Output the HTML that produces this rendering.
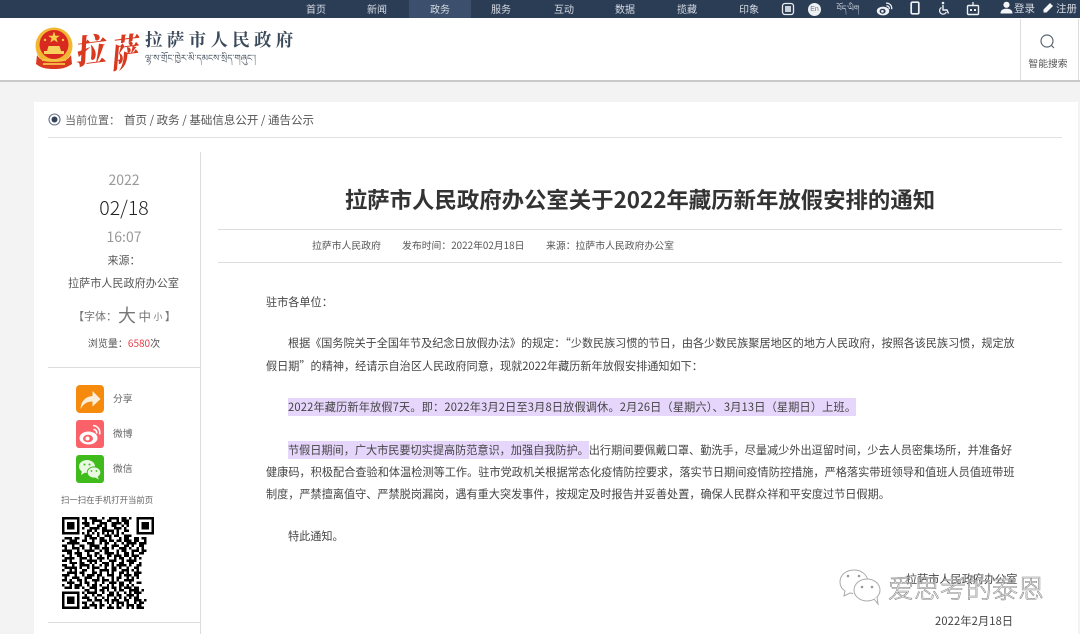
<!DOCTYPE html>
<html lang="zh-CN">
<head>
<meta charset="utf-8">
<title>拉萨市人民政府办公室关于2022年藏历新年放假安排的通知</title>
<style>
html,body{margin:0;padding:0;width:1080px;height:634px;overflow:hidden;background:#f3f3f3}
body{position:relative;font-family:"Liberation Sans","Noto Sans CJK SC",sans-serif;color:#444}
body,.t{font-family:"Noto Sans CJK SC","Liberation Sans",sans-serif}
.t{position:absolute;white-space:nowrap;line-height:16px;height:16px}
.c{transform:translateX(-50%)}
.b{position:absolute}
.n{color:#d5dbe3;font-size:10px;top:0;line-height:17px;height:17px}
.p{font-size:11.15px;color:#444;letter-spacing:0;font-weight:400}
mark{background:#e6d6fb;color:#444;padding:1px 0}
svg{position:absolute;display:block}
</style>
</head>
<body>
<!-- top bar -->
<div class="b" style="left:0;top:0;width:1080px;height:18px;background:#2b3c55"></div>
<div class="b" style="left:409px;top:0;width:62px;height:18px;background:#3c4f6c"></div>
<div class="t n c" style="left:316px">首页</div>
<div class="t n c" style="left:377px">新闻</div>
<div class="t n c" style="left:440px">政务</div>
<div class="t n c" style="left:501px">服务</div>
<div class="t n c" style="left:564px">互动</div>
<div class="t n c" style="left:625px">数据</div>
<div class="t n c" style="left:687px">揽藏</div>
<div class="t n c" style="left:749px">印象</div>

<svg style="left:781px;top:2px" width="14" height="14" viewBox="0 0 14 14"><rect x="1.5" y="1.5" width="11" height="11" rx="2.5" fill="none" stroke="#e8ecf0" stroke-width="1.3"/><rect x="4" y="4" width="6" height="6" fill="#c9d0da"/></svg>
<div class="b" style="left:808px;top:3px;width:13px;height:13px;border-radius:50%;background:#eef1f4;color:#6d7b8e;font-size:7px;line-height:13px;text-align:center;font-family:'Liberation Sans',sans-serif">En</div>
<div class="t n c" style="left:848px;font-size:8px;font-family:'DejaVu Sans','Noto Sans CJK SC',sans-serif">བོད་ཡིག</div>
<svg style="left:876px;top:1px" width="17" height="15" viewBox="0 0 17 15"><ellipse cx="7" cy="10" rx="6.2" ry="4.4" fill="#eef1f4"/><ellipse cx="6.6" cy="10.2" rx="3" ry="2.5" fill="#2b3c55"/><circle cx="6.4" cy="10.3" r="1.3" fill="#eef1f4"/><path d="M10 2.2a5 5 0 0 1 5.6 6M10.400 5a2.400 2.400 0 0 1 2.800 3" fill="none" stroke="#eef1f4" stroke-width="1.300"/></svg>
<svg style="left:910px;top:1px" width="10" height="15" viewBox="0 0 10 15"><rect x="1.200" y="1.200" width="7.600" height="11.600" rx="1.200" fill="none" stroke="#eef1f4" stroke-width="1.700"/></svg>
<svg style="left:938px;top:1px" width="12" height="15" viewBox="0 0 12 15"><circle cx="5" cy="2" r="1.300" fill="#eef1f4"/><path d="M5 4v5h4l1.500 3.500" fill="none" stroke="#eef1f4" stroke-width="1.400"/><path d="M3.500 6.500a3.500 3.500 0 1 0 4.800 4.500" fill="none" stroke="#eef1f4" stroke-width="1.200"/></svg>
<svg style="left:966px;top:1px" width="14" height="15" viewBox="0 0 14 15"><path d="M7 1v3" stroke="#eef1f4" stroke-width="1.300"/><rect x="1.500" y="4.500" width="11" height="9" rx="1" fill="none" stroke="#eef1f4" stroke-width="1.400"/><rect x="4" y="8" width="2" height="2" fill="#eef1f4"/><rect x="8" y="8" width="2" height="2" fill="#eef1f4"/></svg>
<svg style="left:1000px;top:1px" width="13" height="13" viewBox="0 0 13 13"><circle cx="6.500" cy="3.800" r="3.100" fill="#f3f5f7"/><path d="M.5 12.500c0-3.600 2.400-4.800 6-4.800s6 1.200 6 4.800z" fill="#f3f5f7"/></svg>
<div class="t n" style="left:1014px;font-size:10.500px">登录</div>
<svg style="left:1042px;top:2px" width="12" height="12" viewBox="0 0 12 12"><path d="M8 1l3 3-6.500 6.500H1.500V7.500z" fill="#f3f5f7"/></svg>
<div class="t n" style="left:1056px;font-size:10.500px">注册</div>

<!-- header -->
<div class="b" style="left:0;top:18px;width:1080px;height:62px;background:#fff;border-bottom:2px solid #c9c9c9"></div>
<div class="b" style="left:1020px;top:19px;width:57px;height:61px;border-left:1px solid #ddd;border-right:1px solid #ddd"></div>
<svg style="left:1039px;top:33px" width="17" height="17" viewBox="0 0 17 17"><circle cx="8" cy="8" r="6" fill="none" stroke="#5c6670" stroke-width="1.200"/><path d="M12.300 12.300l2.700 2.700" stroke="#5c6670" stroke-width="1.200"/></svg>
<div class="t c" style="left:1048px;top:55px;font-size:9.800px;color:#555">智能搜索</div>

<!-- emblem -->
<svg style="left:35px;top:27px" width="40" height="43" viewBox="0 0 40 43">
<circle cx="19" cy="19" r="18.500" fill="#f2b632"/>
<circle cx="19" cy="17.500" r="14.500" fill="#d8281f"/>
<path d="M19 4.500l1.500 4.200h4.400l-3.500 2.600 1.300 4.200-3.700-2.500-3.700 2.500 1.300-4.200-3.500-2.600h4.400z" fill="#f6cf47"/>
<circle cx="10" cy="13" r="1.200" fill="#f6cf47"/><circle cx="28" cy="13" r="1.200" fill="#f6cf47"/>
<path d="M9 27v-3h3l1.500-5h11l1.500 5h3v3z" fill="#f6d15c"/>
<path d="M2 28c4 6 8 7 17 7s13-1 17-7l1 9c-6 4-10 5-18 5s-13-1-18-5z" fill="#d9391f"/>
<path d="M7 33h24M8 37h22" stroke="#f5c44a" stroke-width="1.800"/>
</svg>
<div class="t" style="left:77px;top:30px;font-family:'Noto Serif CJK SC',serif;font-weight:900;font-size:30px;line-height:36px;height:36px;color:#d8391f;transform:rotate(-7deg) skewX(-10deg) scaleY(1.1)">拉</div>
<div class="t" style="left:111px;top:31px;font-family:'Noto Serif CJK SC',serif;font-weight:900;font-size:30px;line-height:38px;height:38px;color:#d8391f;transform:rotate(-7deg) skewX(-12deg) scale(.88,1.25)">萨</div>
<div class="t" style="left:145px;top:30px;font-family:'Noto Serif CJK SC',serif;font-weight:700;font-size:17.500px;letter-spacing:4.300px;line-height:20px;height:20px;color:#3b4a5a">拉萨市人民政府</div>
<div class="t" style="left:145px;top:52px;width:148px;font-size:9px;line-height:14px;height:14px;color:#4b5763;overflow:hidden;font-family:'DejaVu Sans','Noto Sans CJK SC',sans-serif">ལྷ་ས་གྲོང་ཁྱེར་མི་དམངས་སྲིད་གཞུང་།</div>

<!-- content -->
<div class="b" style="left:34px;top:102px;width:1044px;height:532px;background:#fff"></div>
<svg style="left:48px;top:113px" width="13" height="13" viewBox="0 0 13 13"><circle cx="6.500" cy="6.500" r="5.500" fill="none" stroke="#66748a" stroke-width="1.100"/><circle cx="6.500" cy="6.500" r="3" fill="#34425a"/></svg>
<div class="t" style="left:65px;top:112px;font-size:11px;color:#666">当前位置：</div>
<div class="t" style="left:124px;top:112px;font-size:11.500px;color:#555">首页 / 政务 / 基础信息公开 / 通告公示</div>
<div class="b" style="left:48px;top:137px;width:1014px;height:1px;background:#e2e2e2"></div>

<!-- sidebar -->
<div class="b" style="left:200px;top:152px;width:1px;height:482px;background:#ddd"></div>
<div class="t c" style="left:124px;top:172px;font-size:14px;color:#999">2022</div>
<div class="t c" style="left:124px;top:199px;font-size:19.500px;font-weight:300;color:#222">02/18</div>
<div class="t c" style="left:124px;top:229px;font-size:14px;color:#999">16:07</div>
<div class="t c" style="left:124px;top:252px;font-size:11px;color:#555">来源：</div>
<div class="t c" style="left:123.500px;top:275px;font-size:11.100px;color:#555">拉萨市人民政府办公室</div>
<div class="t" style="left:73px;top:307px;font-size:11px;color:#777">【字体：<span style="font-size:18px;vertical-align:-2px;margin-left:1px">大</span> <span style="font-size:12.500px;vertical-align:-1px">中</span> <span style="font-size:9px">小</span> 】</div>
<div class="t c" style="left:124px;top:335px;font-size:10px;color:#555">浏览量：<span style="color:#e23b45">6580</span>次</div>
<div class="b" style="left:48px;top:367px;width:152px;height:1px;background:#ddd"></div>

<svg style="left:76px;top:385px" width="28" height="28" viewBox="0 0 28 28"><rect width="28" height="28" rx="4" fill="#f58a0c"/><path d="M4.500 24c.5-8 5-12.500 12-13V6l8 8-8 7.500v-5c-6 0-9 2.500-12 7.500z" fill="#fbeed9"/></svg>
<svg style="left:76px;top:420px" width="28" height="28" viewBox="0 0 28 28"><rect width="28" height="28" rx="3" fill="#fb6168"/><ellipse cx="12.500" cy="18" rx="9" ry="6.500" fill="#fff"/><ellipse cx="12" cy="18.500" rx="5" ry="3.800" fill="#fb6168"/><circle cx="11.500" cy="18.500" r="2" fill="#fff"/><path d="M17 5.500a7 7 0 0 1 6.500 9M17.500 9.500a3 3 0 0 1 3 4" fill="none" stroke="#fff" stroke-width="1.600"/></svg>
<svg style="left:76px;top:455px" width="28" height="28" viewBox="0 0 28 28"><rect width="28" height="28" rx="3" fill="#3fbb1c"/><ellipse cx="11" cy="11.500" rx="8" ry="6.500" fill="#e9f7e3"/><path d="M6 16l-1 4 4-2.500z" fill="#e9f7e3"/><ellipse cx="18" cy="17.500" rx="6.800" ry="5.600" fill="#e9f7e3" stroke="#3fbb1c"/><path d="M21.500 21.500l1.500 3-4-2z" fill="#e9f7e3"/><circle cx="8.500" cy="9.500" r="1" fill="#3fbb1c"/><circle cx="13.500" cy="9.500" r="1" fill="#3fbb1c"/><circle cx="15.500" cy="16" r=".9" fill="#3fbb1c"/><circle cx="20.500" cy="16" r=".9" fill="#3fbb1c"/></svg>
<div class="t" style="left:113px;top:390px;font-size:9.800px;color:#666">分享</div>
<div class="t" style="left:113px;top:425px;font-size:9.800px;color:#666">微博</div>
<div class="t" style="left:113px;top:460px;font-size:9.800px;color:#666">微信</div>
<div class="t" style="left:61px;top:492px;font-size:8.400px;color:#666">扫一扫在手机打开当前页</div>

<svg style="left:62px;top:517px" width="92" height="92" viewBox="0 0 37 37" shape-rendering="crispEdges">
<path fill-rule="evenodd" d="M0 0h7v7H0zM1 1v5h5V1zM2 2h3v3H2zM30 0h7v7h-7zM31 1v5h5V1zM32 2h3v3h-3zM0 30h7v7H0zM1 31v5h5v-5zM2 32h3v3H2z"/>
<path fill="none" stroke="#000" d="M8 .5h2m1 0h3m2 0h1m2 0h4m1 0h2m1 0h1M9 1.500h1m2 0h4m2 0h2m2 0h1m1 0h3M8 2.500h3m1 0h1m2 0h3m2 0h4m1 0h2M9 3.500h2m3 0h2m1 0h1m2 0h2m2 0h1m1 0h1M8 4.500h1m2 0h4m1 0h2m3 0h3m1 0h1M10 5.500h2m1 0h1m2 0h5m1 0h1m2 0h2M8 6.500h1m1 0h1m1 0h1m1 0h1m1 0h1m1 0h1m1 0h1m1 0h1m1 0h1M9 7.500h3m2 0h1m2 0h3m1 0h2m2 0h3M1 8.500h3m1 0h2m2 0h1m1 0h3m1 0h2m2 0h1m3 0h1m1 0h2m2 0h2m1 0h2M0 9.500h1m2 0h3m2 0h2m2 0h1m2 0h3m1 0h2m1 0h2m1 0h3m1 0h2m2 0h1M2 10.500h5m3 0h3m2 0h1m1 0h2m2 0h1m2 0h1m1 0h4m1 0h3M0 11.500h2m2 0h1m2 0h2m2 0h4m2 0h1m2 0h3m2 0h2m1 0h1m2 0h2M1 12.500h1m2 0h3m1 0h1m2 0h1m1 0h2m1 0h3m1 0h1m2 0h3m1 0h1m2 0h1m1 0h1M0 13.500h4m2 0h1m2 0h4m2 0h1m1 0h2m3 0h1m1 0h2m2 0h3m1 0h2M2 14.500h2m1 0h3m2 0h1m2 0h2m2 0h4m1 0h1m2 0h2m1 0h1m2 0h2M0 15.500h1m2 0h1m2 0h2m2 0h2m1 0h1m1 0h1m2 0h2m1 0h3m1 0h2m1 0h3M1 16.500h4m2 0h3m1 0h1m2 0h3m1 0h1m2 0h1m1 0h2m2 0h1m1 0h1m1 0h1M0 17.500h2m1 0h1m3 0h1m2 0h4m1 0h1m3 0h3m2 0h1m1 0h4M3 18.500h3m1 0h2m2 0h1m1 0h1m2 0h3m1 0h1m2 0h2m2 0h2m2 0h1M0 19.500h2m2 0h1m2 0h4m1 0h1m2 0h1m1 0h2m1 0h1m1 0h4m1 0h1m2 0h2M1 20.500h5m1 0h1m2 0h1m1 0h3m2 0h1m2 0h2m1 0h1m2 0h1m2 0h2M0 21.500h1m2 0h1m1 0h1m2 0h2m2 0h1m2 0h4m1 0h2m2 0h3m1 0h1m1 0h1M2 22.500h4m1 0h2m3 0h2m1 0h1m2 0h1m1 0h1m2 0h2m1 0h1m2 0h3M0 23.500h3m2 0h1m2 0h1m1 0h3m1 0h2m2 0h3m2 0h1m1 0h3m1 0h2M1 24.500h1m2 0h3m2 0h3m2 0h1m1 0h1m3 0h1m1 0h2m2 0h1m1 0h1m1 0h1M0 25.500h2m1 0h1m2 0h2m1 0h1m2 0h3m1 0h3m1 0h1m1 0h1m2 0h4M2 26.500h3m2 0h1m1 0h2m2 0h1m2 0h1m2 0h3m1 0h2m2 0h1m2 0h2M0 27.500h1m2 0h1m1 0h3m2 0h1m1 0h2m1 0h1m2 0h1m1 0h1m2 0h2m1 0h1m1 0h1M1 28.500h3m1 0h2m1 0h1m2 0h3m2 0h3m1 0h2m1 0h1m1 0h3m1 0h2M9 29.500h2m2 0h1m1 0h2m1 0h1m2 0h1m1 0h2m2 0h4m1 0h1M8 30.500h1m1 0h4m2 0h1m2 0h2m1 0h1m2 0h1m1 0h1m1 0h3M9 31.500h1m2 0h1m1 0h2m2 0h3m1 0h2m2 0h3m1 0h1M8 32.500h3m2 0h1m2 0h1m1 0h1m2 0h1m1 0h1m1 0h1m1 0h1m1 0h2M10 33.500h2m1 0h3m1 0h2m1 0h3m2 0h2m2 0h3m1 0h1M8 34.500h2m2 0h1m2 0h1m2 0h1m1 0h1m1 0h3m1 0h1m2 0h1m1 0h2M9 35.500h1m1 0h3m1 0h2m2 0h1m2 0h1m1 0h1m1 0h3m1 0h2M8 36.500h3m2 0h1m1 0h1m2 0h3m1 0h2m2 0h1m1 0h1m1 0h3"/>
</svg>
<div class="b" style="left:48px;top:622px;width:152px;height:1px;background:#ddd"></div>

<!-- article -->
<div class="t c" style="left:640px;top:184px;height:30px;line-height:30px;font-size:22.400px;font-weight:700;color:#333">拉萨市人民政府办公室关于2022年藏历新年放假安排的通知</div>
<div class="b" style="left:218px;top:229px;width:844px;height:1px;background:#ddd"></div>
<div class="b" style="left:218px;top:262px;width:844px;height:1px;background:#ddd"></div>
<div class="t" style="left:312px;top:237px;font-size:9.850px;color:#555">拉萨市人民政府</div>
<div class="t" style="left:402px;top:237px;font-size:9.850px;color:#555">发布时间：2022年02月18日</div>
<div class="t" style="left:546px;top:237px;font-size:9.850px;color:#555">来源：拉萨市人民政府办公室</div>

<div class="t p" style="left:266px;top:294px">驻市各单位：</div>
<div class="t p" style="left:288px;top:335px;font-size:11.100px">根据《国务院关于全国年节及纪念日放假办法》的规定：“少数民族习惯的节日，由各少数民族聚居地区的地方人民政府，按照各该民族习惯，规定放</div>
<div class="t p" style="left:266px;top:358px">假日期”的精神，经请示自治区人民政府同意，现就2022年藏历新年放假安排通知如下：</div>
<div class="t p" style="left:288px;top:399px;letter-spacing:.18px"><mark>2022年藏历新年放假7天。即：2022年3月2日至3月8日放假调休。2月26日（星期六）、3月13日（星期日）上班。</mark></div>
<div class="t p" style="left:288px;top:442px"><mark>节假日期间，广大市民要切实提高防范意识，加强自我防护。</mark>出行期间要佩戴口罩、勤洗手，尽量减少外出逗留时间，少去人员密集场所，并准备好</div>
<div class="t p" style="left:266px;top:464px;font-size:11.180px">健康码，积极配合查验和体温检测等工作。驻市党政机关根据常态化疫情防控要求，落实节日期间疫情防控措施，严格落实带班领导和值班人员值班带班</div>
<div class="t p" style="left:266px;top:486px">制度，严禁擅离值守、严禁脱岗漏岗，遇有重大突发事件，按规定及时报告并妥善处置，确保人民群众祥和平安度过节日假期。</div>
<div class="t p" style="left:288px;top:528px">特此通知。</div>
<div class="t p" style="left:906px;top:571px">拉萨市人民政府办公室</div>
<div class="t p" style="left:935px;top:613px;letter-spacing:.15px">2022年2月18日</div>

<!-- watermark -->
<svg style="left:838px;top:568px" width="46" height="38" viewBox="0 0 46 38"><path d="M16 2C8 2 2 7 2 14c0 4 2 7 5 9l-1 5 6-3c1 0 2 .5 3 .5" fill="#fff" fill-opacity=".7" stroke="#aaa"/><path d="M16 2c7 0 12 4 13.500 9" fill="none" stroke="#aaa"/><ellipse cx="29" cy="22" rx="13" ry="11" fill="#fff" fill-opacity=".7" stroke="#aaa"/><path d="M36 31l4 5-1-7" fill="#fff" stroke="#aaa"/><circle cx="10" cy="8" r="1.300" fill="#999"/><circle cx="21" cy="8" r="1.300" fill="#999"/><circle cx="24" cy="19" r="1.300" fill="#999"/><circle cx="34" cy="19" r="1.300" fill="#999"/></svg>
<div class="t" style="left:888px;top:570px;height:36px;line-height:36px;font-size:26px;color:rgba(255,255,255,.6);-webkit-text-stroke:.6px #888;font-weight:300">爱思考的泰恩</div>
</body>
</html>
